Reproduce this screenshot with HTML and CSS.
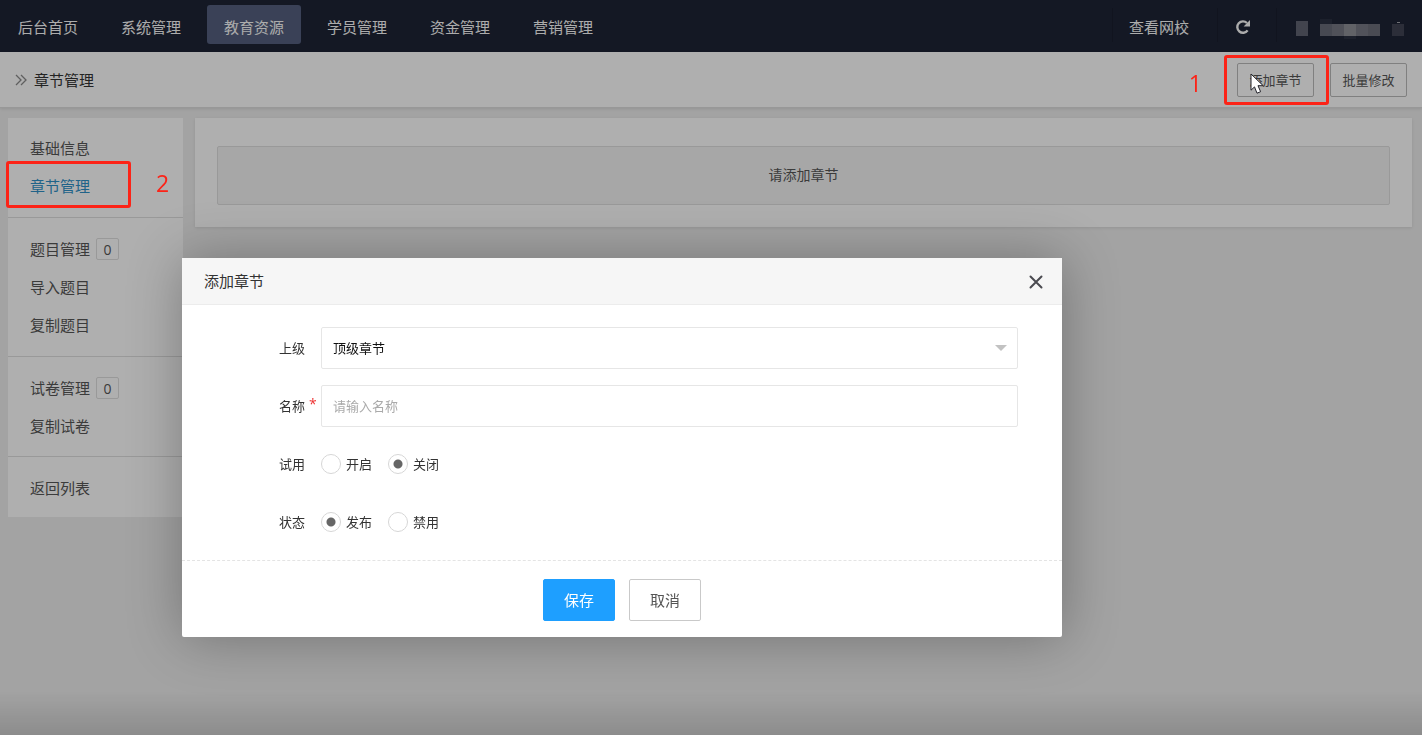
FILE: index.html
```html
<!DOCTYPE html>
<html lang="zh-CN">
<head>
<meta charset="utf-8">
<title>章节管理</title>
<link rel="stylesheet" href="styles.css">
</head>
<body>
<header class="topbar">
  <nav class="topnav">
    <a href="#">后台首页</a>
    <a href="#">系统管理</a>
    <a href="#" class="active">教育资源</a>
    <a href="#">学员管理</a>
    <a href="#">资金管理</a>
    <a href="#">营销管理</a>
  </nav>
  <div class="tools">
    <a href="#" class="tool">查看网校</a>
    <button type="button" class="tool refresh" aria-label="刷新">
      <svg width="16" height="16" viewBox="0 0 16 16" fill="none" stroke="currentColor" stroke-width="2.4"><path d="M12.6 11.4A5.7 5.7 0 1 1 12 4"/><path d="M15 1v6.4H8.6z" fill="currentColor" stroke="none"/></svg>
    </button>
    <div class="tool account">
      <svg width="112" height="24" viewBox="0 0 112 24" shape-rendering="crispEdges">
        <rect x="2" y="6" width="12" height="15" fill="#5f6270"/>
        <rect x="26" y="9" width="12" height="12" fill="#666976"/>
        <rect x="26" y="4" width="12" height="5" fill="#292e3f"/>
        <rect x="38" y="9" width="12" height="12" fill="#737580"/>
        <rect x="50" y="9" width="12" height="12" fill="#8c8d94"/>
        <rect x="50" y="21" width="12" height="3" fill="#292e3f"/>
        <rect x="62" y="9" width="12" height="12" fill="#747681"/>
        <rect x="74" y="9" width="12" height="12" fill="#6a6c78"/>
        <rect x="98" y="9" width="12" height="12" fill="#3f4352"/>
        <rect x="103" y="7" width="3" height="1" fill="#a0a1a8"/>
      </svg>
    </div>
  </div>
</header>

<div class="subbar">
  <h1 class="crumb">
    <svg width="12" height="12" viewBox="0 0 12 12" fill="none" stroke="currentColor" stroke-width="1.3"><path d="M1 1l5 5-5 5M6 1l5 5-5 5"/></svg>
    章节管理
  </h1>
  <div class="actions">
    <button type="button" class="btn-sm">添加章节</button>
    <button type="button" class="btn-sm">批量修改</button>
  </div>
</div>

<div class="layout">
  <aside class="sidebar">
    <div class="group">
      <a href="#">基础信息</a>
      <a href="#" class="current">章节管理</a>
    </div>
    <div class="group">
      <a href="#">题目管理<span class="count">0</span></a>
      <a href="#">导入题目</a>
      <a href="#">复制题目</a>
    </div>
    <div class="group">
      <a href="#">试卷管理<span class="count">0</span></a>
      <a href="#">复制试卷</a>
    </div>
    <div class="group">
      <a href="#">返回列表</a>
    </div>
  </aside>
  <main class="card">
    <p class="empty">请添加章节</p>
  </main>
</div>

<div class="shade"></div>

<form class="dialog" role="dialog" aria-labelledby="dialog-title">
  <div class="dialog-head">
    <h2 id="dialog-title">添加章节</h2>
    <button type="button" class="close" aria-label="关闭窗口">
      <svg width="14" height="14" viewBox="0 0 14 14" fill="none" stroke="currentColor" stroke-width="2" stroke-linecap="round"><path d="M1.5 1.5l11 11M12.5 1.5l-11 11"/></svg>
    </button>
  </div>
  <div class="dialog-body">
    <label class="name" for="parent">上级</label>
    <div class="select-box">
      <select id="parent"><option>顶级章节</option></select>
    </div>
    <label class="name required" for="title">名称</label>
    <input class="text" id="title" type="text" placeholder="请输入名称">
    <span class="name" id="trial-label">试用</span>
    <div class="radios" role="radiogroup" aria-labelledby="trial-label">
      <label><input type="radio" name="trial">开启</label>
      <label><input type="radio" name="trial" checked>关闭</label>
    </div>
    <span class="name" id="state-label">状态</span>
    <div class="radios" role="radiogroup" aria-labelledby="state-label">
      <label><input type="radio" name="state" checked>发布</label>
      <label><input type="radio" name="state">禁用</label>
    </div>
  </div>
  <div class="dialog-foot">
    <button type="submit" class="btn primary">保存</button>
    <button type="button" class="btn">取消</button>
  </div>
</form>

<div class="mark mark-add"></div>
<span class="step step-one">1</span>
<div class="mark mark-menu"></div>
<span class="step step-two">2</span>
<svg class="pointer" width="14" height="22" viewBox="0 0 14 22"><path d="M1 1v16.2l3.5-3.3 2.5 6.3 3.6-1.5-2.6-6h5.2z" fill="#fff" stroke="#23232b" stroke-linejoin="round"/></svg>
</body>
</html>
```
FILE: styles.css
```css
* {
  box-sizing: border-box;
}

body {
  margin: 0;
  min-height: 100vh;
  background: #eaeaea;
  color: #555;
  font: 15px/24px "Open Sans", "Noto Sans CJK SC", sans-serif;
}

a {
  color: inherit;
  text-decoration: none;
}

button,
input,
select {
  font-family: inherit;
}

h1,
h2,
p {
  margin: 0;
  font-weight: 400;
}

.topbar {
  display: flex;
  justify-content: space-between;
  height: 52px;
  background: #1d2334;
  color: #f6f6f6;
}

.topnav {
  display: flex;
  align-items: flex-start;
  gap: 9px;
  padding: 5px 0 0 1px;
}

.topnav a {
  height: 39px;
  padding: 0 17px;
  border-radius: 3px;
  line-height: 44px;
}

.topnav .active {
  background: #535e7d;
}

.tools {
  display: flex;
  padding: 8px 0 10px;
}

.tool {
  display: flex;
  align-items: center;
  padding: 4px 28px 0 16px;
  border: 0;
  border-left: 1px solid #191e2d;
  background: none;
  color: inherit;
}

.refresh {
  padding: 4px 25px 0 17px;
}

.account {
  padding: 3px 16px 0 17px;
}

.subbar {
  display: flex;
  align-items: center;
  justify-content: space-between;
  height: 56px;
  padding: 0 15px;
  border-bottom: 1px solid #dadada;
  background: #fbfbfb;
  box-shadow: 0 1px 3px rgba(0, 0, 0, 0.1);
}

.crumb {
  display: flex;
  align-items: center;
  gap: 7px;
  color: #333;
  font-size: 15px;
}

.crumb svg {
  color: #888;
}

.actions {
  display: flex;
  gap: 16px;
}

.btn-sm {
  width: 77px;
  height: 34px;
  padding: 0;
  border: 1px solid #b8b8b8;
  border-radius: 2px;
  background: none;
  color: #555;
  font-size: 13px;
}

.layout {
  display: flex;
  align-items: flex-start;
  gap: 12px;
  padding: 10px 10px 0 8px;
}

.sidebar {
  flex: none;
  width: 175px;
  background: #fbfbfb;
}

.group {
  padding: 12px 22px 11px;
  border-bottom: 1px solid #dcdcdc;
}

.group:first-child {
  padding-bottom: 12px;
  padding-top: 11px;
}

.group:nth-child(2) {
  padding-bottom: 12px;
}

.group:last-child {
  border-bottom: 0;
  padding-bottom: 10px;
}

.group a {
  display: flex;
  align-items: center;
  gap: 6px;
  height: 38px;
}

.group .current {
  color: #2f8fc4;
}

.count {
  width: 23px;
  height: 22px;
  border: 1px solid #dcdcdc;
  border-radius: 2px;
  font-size: 14px;
  line-height: 21px;
  text-align: center;
}

.card {
  flex: 1;
  padding: 28px 22px 22px;
  background: #fbfbfb;
  box-shadow: 0 1px 3px rgba(0, 0, 0, 0.1);
}

.empty {
  padding: 16px 16px 17px;
  border: 1px solid #dcdcdc;
  border-radius: 2px;
  background: #f0f0f0;
  font-size: 14px;
  line-height: 24px;
  text-align: center;
}

.shade {
  position: fixed;
  inset: 0;
  background: linear-gradient(transparent calc(100% - 44px), rgba(0, 0, 0, 0.14)), rgba(0, 0, 0, 0.3);
}

.dialog {
  position: absolute;
  top: 258px;
  left: 182px;
  width: 880px;
  border-radius: 2px;
  background: #fff;
  box-shadow: 1px 1px 55px rgba(0, 0, 0, 0.3);
  color: #333;
  font-size: 13px;
}

.dialog-head {
  display: flex;
  align-items: center;
  justify-content: space-between;
  height: 47px;
  padding: 0 18px 0 22px;
  border-bottom: 1px solid #ececec;
  background: #f6f6f6;
}

.dialog-head h2 {
  font-size: 15px;
}

.close {
  display: flex;
  padding: 3px 1px 1px;
  border: 0;
  background: none;
  color: #4a4a50;
}

.dialog-body {
  display: grid;
  grid-template-columns: 123px 1fr;
  grid-auto-rows: 42px;
  gap: 16px;
  align-items: center;
  padding: 22px 44px 17px 0;
}

.name {
  position: relative;
  text-align: right;
}

.required::after {
  content: "*";
  position: absolute;
  top: -2px;
  left: calc(100% + 4px);
  color: #e33;
  font-size: 14px;
}

.select-box {
  position: relative;
}

.select-box::after {
  content: "";
  position: absolute;
  top: 18px;
  right: 11px;
  border: 6px solid transparent;
  border-top-color: #c2c2c2;
  border-bottom: 0;
  pointer-events: none;
}

.select-box select,
.text {
  width: 100%;
  height: 42px;
  padding: 0 11px;
  border: 1px solid #e6e6e6;
  border-radius: 2px;
  background: #fff;
  color: #111;
  font-size: 13px;
  appearance: none;
}

.text::placeholder {
  color: #aaa;
}

.radios {
  display: flex;
  gap: 16px;
}

.radios label {
  display: flex;
  align-items: center;
  gap: 5px;
}

.radios input {
  width: 20px;
  height: 20px;
  margin: 0;
  border: 1px solid #d6d6d6;
  border-radius: 50%;
  appearance: none;
}

.radios input:checked {
  background: radial-gradient(circle, #666 4px, transparent 5px);
}

.dialog-foot {
  display: flex;
  justify-content: center;
  gap: 14px;
  padding: 18px 0 16px;
  border-top: 1px dashed #e4e4e4;
}

.btn {
  height: 42px;
  padding: 0 20px 2px;
  border: 1px solid #c9c9c9;
  border-radius: 2px;
  background: #fff;
  color: #555;
  font-size: 15px;
}

.btn.primary {
  border-color: #1e9fff;
  background: #1e9fff;
  color: #fff;
}

.mark {
  position: absolute;
  border: 3px solid #fc2317;
  border-radius: 3px;
  pointer-events: none;
}

.mark-add {
  top: 55px;
  right: 93px;
  width: 105px;
  height: 50px;
}

.mark-menu {
  top: 161px;
  left: 6px;
  width: 125px;
  height: 47px;
}

.step {
  position: absolute;
  color: #fc2317;
  font-size: 23px;
  line-height: 24px;
}

.step-one {
  top: 71px;
  right: 220px;
}

.step-two {
  top: 171px;
  left: 156px;
}

.pointer {
  position: absolute;
  top: 73px;
  right: 158px;
}
```
